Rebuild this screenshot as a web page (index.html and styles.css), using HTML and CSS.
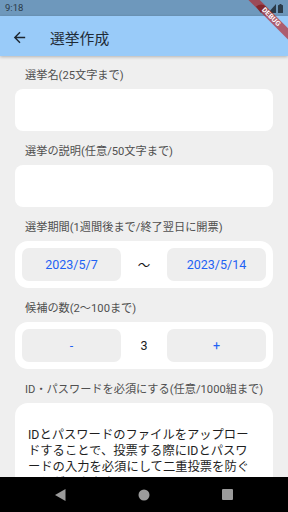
FILE: index.html
```html
<!DOCTYPE html>
<html lang="ja">
<head>
<meta charset="utf-8">
<link rel="stylesheet" href="styles.css">
</head>
<body>
<div class="screen">
  <div class="status">
    <span class="time">9:18</span>
    <span class="status-icons">
      <svg class="wifi" width="10" height="9" viewBox="0 0 10 9"><path d="M0 2.5 Q5 -1.5 10 2.5 L5 9 Z" fill="#2a3a48"/></svg>
      <svg class="signal" width="8" height="9" viewBox="0 0 8 9"><path d="M8 0 V9 H0 Z" fill="#2a3a48"/></svg>
      <svg class="battery" width="5" height="9" viewBox="0 0 5 9"><rect x="1.5" y="0" width="2" height="1" fill="#2a3a48"/><rect x="0" y="1" width="5" height="8" rx="0.5" fill="#2a3a48"/></svg>
    </span>
  </div>
  <header class="appbar">
    <svg class="back" width="17" height="17" viewBox="0 0 24 24"><path d="M20 11H7.83l5.59-5.59L12 4l-8 8 8 8 1.41-1.41L7.83 13H20v-2z" fill="#1d2630"/></svg>
    <h1 class="title">選挙作成</h1>
  </header>
  <main class="content">
    <p class="label first">選挙名(25文字まで)</p>
    <div class="input"></div>
    <p class="label">選挙の説明(任意/50文字まで)</p>
    <div class="input"></div>
    <p class="label">選挙期間(1週間後まで/終了翌日に開票)</p>
    <div class="card row">
      <button class="btn">2023/5/7</button>
      <span class="mid">〜</span>
      <button class="btn">2023/5/14</button>
    </div>
    <p class="label">候補の数(2〜100まで)</p>
    <div class="card row">
      <button class="btn">-</button>
      <span class="mid count">3</span>
      <button class="btn">+</button>
    </div>
    <p class="label">ID・パスワードを必須にする(任意/1000組まで)</p>
    <div class="card text-card">
      <p class="desc">IDとパスワードのファイルをアップロードすることで、投票する際にIDとパスワードの入力を必須にして二重投票を防ぐことができます。</p>
    </div>
  </main>
  <nav class="navbar">
    <svg width="11" height="12" viewBox="0 0 11 12"><path d="M10.5 0 V12 L0 6 Z" fill="#9b9b9b"/></svg>
    <svg width="12" height="12" viewBox="0 0 12 12"><circle cx="6" cy="6" r="5.5" fill="#9b9b9b"/></svg>
    <svg width="11" height="11" viewBox="0 0 11 11"><rect width="11" height="11" rx="1" fill="#9b9b9b"/></svg>
  </nav>
  <div class="debug">DEBUG</div>
</div>
</body>
</html>
```
FILE: styles.css
```css
* { box-sizing: border-box; }
html, body { margin: 0; padding: 0; }
body {
  width: 288px;
  height: 512px;
  overflow: hidden;
  background: #efefef;
  font-family: Roboto, "Noto Sans CJK JP", sans-serif;
}
.screen {
  position: relative;
  width: 288px;
  height: 512px;
  overflow: hidden;
  display: flex;
  flex-direction: column;
}
.status {
  flex: 0 0 16px;
  background: #6e98bc;
  display: flex;
  align-items: center;
  justify-content: space-between;
  padding: 0 5px;
}
.time {
  font-size: 9.5px;
  color: #2a3a48;
  line-height: 1;
}
.status-icons {
  display: flex;
  align-items: center;
  gap: 2px;
}
.appbar {
  flex: 0 0 40px;
  background: #99cbf9;
  display: flex;
  align-items: center;
  padding: 2px 0 0 11px;
  box-shadow: 0 1px 3px rgba(0,0,0,0.25);
  position: relative;
  z-index: 1;
}
.back { display: block; }
.title {
  margin: 0 0 0 22px;
  font-size: 14.8px;
  font-weight: 400;
  color: #1f2a35;
}
.content {
  flex: 1 1 auto;
  overflow: hidden;
  padding: 0 15px;
}
.label {
  margin: 13px 0 5px 10px;
  font-size: 11.2px;
  line-height: 16px;
  color: #505050;
}
.label.first { margin-top: 12px; }
.input {
  height: 42px;
  background: #fff;
  border-radius: 8px;
}
.card {
  background: #fff;
  border-radius: 13px;
}
.row {
  display: grid;
  grid-template-columns: 1fr 46px 1fr;
  align-items: center;
  padding: 7px;
}
.btn {
  height: 33px;
  border: 0;
  border-radius: 7px;
  background: #eeeeee;
  color: #1f62f4;
  font-family: Roboto, "Noto Sans CJK JP", sans-serif;
  font-size: 12.5px;
  padding: 0;
}
.mid {
  text-align: center;
  font-size: 12.5px;
  color: #1a1a1a;
}
.text-card {
  padding: 24px 18px 20px 13px;
}
.desc {
  margin: 0;
  font-size: 12.3px;
  line-height: 16px;
  color: #1e1e1e;
  line-break: anywhere;
}
.navbar {
  position: absolute;
  left: 0;
  right: 0;
  bottom: 0;
  height: 35px;
  background: #000;
  display: flex;
  align-items: center;
  justify-content: space-between;
  padding: 0 55px 0 55px;
}
.debug {
  position: absolute;
  left: 231px;
  top: 12.6px;
  width: 80px;
  height: 8.4px;
  background: rgba(183, 28, 28, 0.63);
  color: #fff;
  font-size: 7px;
  font-weight: 700;
  line-height: 8.4px;
  text-align: center;
  letter-spacing: 0.2px;
  transform: rotate(45deg);
  z-index: 5;
}
```
